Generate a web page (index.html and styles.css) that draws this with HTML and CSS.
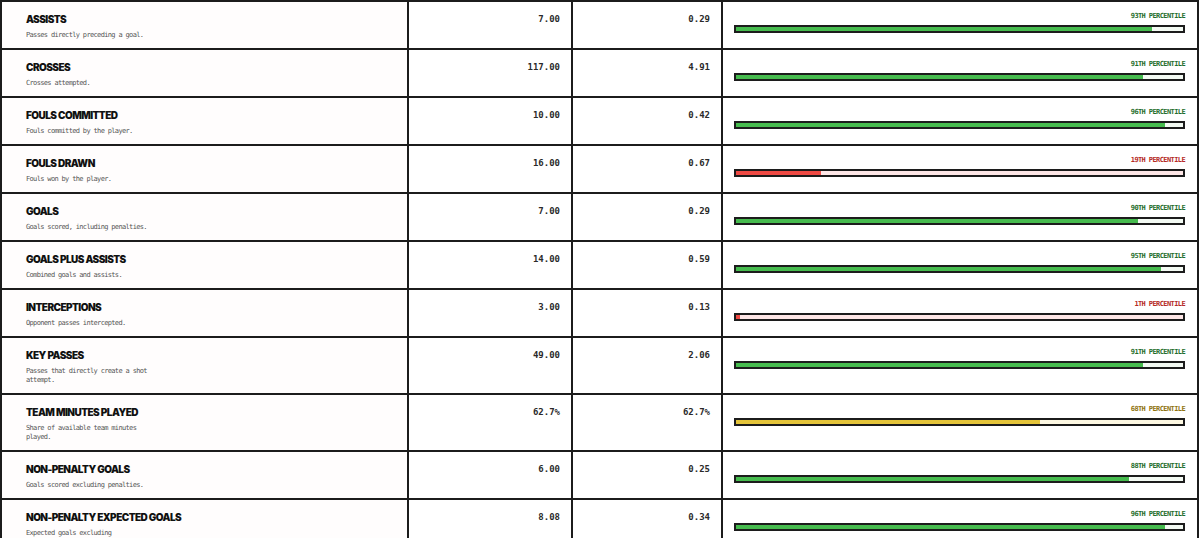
FILE: index.html
```html
<!DOCTYPE html>
<html>
<head>
<meta charset="utf-8">
<link rel="stylesheet" href="styles.css">
</head>
<body>
<table class="stats">
  <colgroup>
    <col class="c-name"><col class="c-total"><col class="c-p90"><col class="c-pct">
  </colgroup>
  <tbody>
    <tr>
      <td class="name"><div class="title">Assists</div><div class="desc">Passes directly preceding a goal.</div></td>
      <td class="num">7.00</td><td class="num">0.29</td>
      <td class="pct good"><div class="plabel">93TH PERCENTILE</div><div class="bar"><div class="fill" style="width:93%"></div></div></td>
    </tr>
    <tr>
      <td class="name"><div class="title">Crosses</div><div class="desc">Crosses attempted.</div></td>
      <td class="num">117.00</td><td class="num">4.91</td>
      <td class="pct good"><div class="plabel">91TH PERCENTILE</div><div class="bar"><div class="fill" style="width:91%"></div></div></td>
    </tr>
    <tr>
      <td class="name"><div class="title">Fouls Committed</div><div class="desc">Fouls committed by the player.</div></td>
      <td class="num">10.00</td><td class="num">0.42</td>
      <td class="pct good"><div class="plabel">96TH PERCENTILE</div><div class="bar"><div class="fill" style="width:96%"></div></div></td>
    </tr>
    <tr>
      <td class="name"><div class="title">Fouls Drawn</div><div class="desc">Fouls won by the player.</div></td>
      <td class="num">16.00</td><td class="num">0.67</td>
      <td class="pct bad"><div class="plabel">19TH PERCENTILE</div><div class="bar"><div class="fill" style="width:19%"></div></div></td>
    </tr>
    <tr>
      <td class="name"><div class="title">Goals</div><div class="desc">Goals scored, including penalties.</div></td>
      <td class="num">7.00</td><td class="num">0.29</td>
      <td class="pct good"><div class="plabel">90TH PERCENTILE</div><div class="bar"><div class="fill" style="width:90%"></div></div></td>
    </tr>
    <tr>
      <td class="name"><div class="title">Goals Plus Assists</div><div class="desc">Combined goals and assists.</div></td>
      <td class="num">14.00</td><td class="num">0.59</td>
      <td class="pct good"><div class="plabel">95TH PERCENTILE</div><div class="bar"><div class="fill" style="width:95%"></div></div></td>
    </tr>
    <tr>
      <td class="name"><div class="title">Interceptions</div><div class="desc">Opponent passes intercepted.</div></td>
      <td class="num">3.00</td><td class="num">0.13</td>
      <td class="pct bad"><div class="plabel">1TH PERCENTILE</div><div class="bar"><div class="fill" style="width:1%"></div></div></td>
    </tr>
    <tr>
      <td class="name"><div class="title">Key Passes</div><div class="desc">Passes that directly create a shot attempt.</div></td>
      <td class="num">49.00</td><td class="num">2.06</td>
      <td class="pct good"><div class="plabel">91TH PERCENTILE</div><div class="bar"><div class="fill" style="width:91%"></div></div></td>
    </tr>
    <tr>
      <td class="name"><div class="title">Team Minutes Played</div><div class="desc">Share of available team minutes played.</div></td>
      <td class="num">62.7%</td><td class="num">62.7%</td>
      <td class="pct mid"><div class="plabel">68TH PERCENTILE</div><div class="bar"><div class="fill" style="width:68%"></div></div></td>
    </tr>
    <tr>
      <td class="name"><div class="title">Non-Penalty Goals</div><div class="desc">Goals scored excluding penalties.</div></td>
      <td class="num">6.00</td><td class="num">0.25</td>
      <td class="pct good"><div class="plabel">88TH PERCENTILE</div><div class="bar"><div class="fill" style="width:88%"></div></div></td>
    </tr>
    <tr>
      <td class="name"><div class="title">Non-Penalty Expected Goals</div><div class="desc">Expected goals excluding penalties.</div></td>
      <td class="num">8.08</td><td class="num">0.34</td>
      <td class="pct good"><div class="plabel">96TH PERCENTILE</div><div class="bar"><div class="fill" style="width:96%"></div></div></td>
    </tr>
  </tbody>
</table>
</body>
</html>
```
FILE: styles.css
```css
html, body {
  margin: 0;
  padding: 0;
  background: #ffffff;
}
body {
  width: 1200px;
  height: 538px;
  overflow: hidden;
}
.stats {
  width: 1197px;
  border-collapse: collapse;
  table-layout: fixed;
  border: 2px solid #1c1c1c;
}
.c-name { width: 407px; }
.c-total { width: 164px; }
.c-p90 { width: 150px; }
.c-pct { width: 476px; }

.stats td {
  border: 2px solid #1c1c1c;
  vertical-align: top;
  padding: 0;
}
.name {
  background: #fffdfd;
  padding: 11px 10px 8px 24px !important;
}
.title {
  font-family: Inter, "Liberation Sans", sans-serif;
  font-weight: 900;
  font-size: 10px;
  line-height: 12px;
  letter-spacing: -0.55px;
  word-spacing: 0.2px;
  text-transform: uppercase;
  color: #111111;
}
.desc {
  margin-top: 6px;
  width: 123px;
  font-family: "DejaVu Sans Mono", "Liberation Mono", monospace;
  font-size: 7px;
  line-height: 9px;
  letter-spacing: -0.66px;
  color: #555555;
}
.num {
  padding: 11px 11px 0 0 !important;
  text-align: right;
  font-family: "DejaVu Sans Mono", "Liberation Mono", monospace;
  font-size: 9px;
  line-height: 12px;
  font-weight: bold;
  color: #2a2a2a;
}
.pct {
  padding: 9px 12px 0 11px !important;
}
.plabel {
  text-align: right;
  font-family: "DejaVu Sans Mono", "Liberation Mono", monospace;
  font-size: 7px;
  line-height: 10px;
  font-weight: bold;
  letter-spacing: -0.6px;
}
.bar {
  margin-top: 4px;
  height: 4px;
  border: 2px solid #1c1c1c;
  background: #f3faf3;
}
.fill {
  height: 100%;
}
.good .plabel { color: #1f6e2c; }
.good .fill { background: #46bb4e; }
.good .bar { background: #f3faf3; }
.bad .plabel { color: #b52a25; }
.bad .fill { background: #ef4a44; }
.bad .bar { background: #fde6e6; }
.mid .plabel { color: #8f7410; }
.mid .fill { background: #e4c43a; }
.mid .bar { background: #fdf8e2; }
```
